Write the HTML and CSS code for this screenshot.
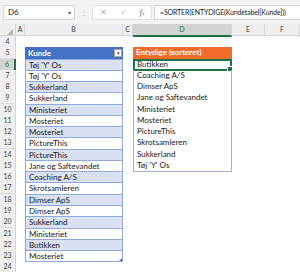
FILE: index.html
```html
<!DOCTYPE html>
<html>
<head>
  <meta charset="UTF-8">
  <title>SORTER ENTYDIGE</title>
  <link rel="stylesheet" href="styles.css">
</head>
<body>

<div class="toolbar">
  <div class="nameBox">
    <span>D6</span>
    <span class="caret">&#9662;</span>
  </div>
  <div class="dots">&#8942;</div>
  <div class="fxButtons">
    <span class="fxBtn">&#10005;</span>
    <span class="fxBtn">&#10003;</span>
    <span class="fxBtn fx"><i>f</i><small>x</small></span>
  </div>
  <div class="formula">=SORTER(ENTYDIGE(Kundetabel[Kunde]))</div>
</div>

<div class="sheet">
  <div class="row colHeads">
    <div class="corner"><span class="tri"></span></div>
    <div class="ch">A</div>
    <div class="ch">B</div>
    <div class="ch">C</div>
    <div class="ch sel">D</div>
    <div class="ch">E</div>
    <div class="ch">F</div>
  </div>
  <div id="rows"></div>
</div>

<script>
  const kunder = ["Tøj 'Y' Os", "Tøj 'Y' Os", "Sukkerland", "Sukkerland", "Ministeriet", "Mosteriet",
    "Mosteriet", "PictureThis", "PictureThis", "Jane og Saftevandet", "Coaching A/S", "Skrotsamleren",
    "Dimser ApS", "Dimser ApS", "Sukkerland", "Ministeriet", "Butikken", "Mosteriet"];

  // unique + sorted, like the formula
  const entydige = [...new Set(kunder)].sort((a, b) => a.localeCompare(b, "da"));

  const rows = document.getElementById("rows");
  for (let r = 4; r <= 24; r++) {
    let b = "", d = "";
    let bClass = "", dClass = "";

    if (r === 5) {
      bClass = "tHead";
      b = `<span>Kunde</span><span class="filter">&#9662;</span>`;
      dClass = "sHead";
      d = "Entydige (sorteret)";
    } else if (r >= 6 && r < 6 + kunder.length) {
      bClass = "tCell " + (r % 2 === 0 ? "band" : "");
      if (r === 5 + kunder.length) bClass += " tLast";
      b = kunder[r - 6];
    }
    if (r >= 6 && r < 6 + entydige.length) {
      dClass = "spill";
      if (r === 6) dClass += " active";
      if (r === 5 + entydige.length) dClass += " spillLast";
      d = entydige[r - 6];
    }

    const row = document.createElement("div");
    row.className = "row";
    row.innerHTML = `
      <div class="rh ${r === 6 ? 'sel' : ''}">${r}</div>
      <div></div>
      <div class="cell ${bClass}">${b}</div>
      <div></div>
      <div class="cell ${dClass}">${d}</div>
      <div></div>
      <div></div>
    `;
    rows.appendChild(row);
  }
</script>

</body>
</html>
```

FILE: styles.css
```css
body {
  margin: 0;
  width: 300px;
  height: 272px;
  overflow: hidden;
  background: #fff;
  font-family: Lato, "Open Sans", sans-serif;
  font-size: 8px;
  color: #1a1a1a;
}

.toolbar {
  height: 24px;
  background: #f3f3f3;
  display: flex;
  align-items: center;
  padding: 0 0 0 3px;
  box-sizing: border-box;
}

.nameBox {
  width: 72px;
  height: 15px;
  background: #fff;
  border: 1px solid #d6d6d6;
  box-sizing: border-box;
  display: flex;
  align-items: center;
  justify-content: space-between;
  padding: 0 3px 0 4px;
  font-size: 8px;
}

.caret {
  color: #555;
  font-size: 6px;
}

.dots {
  width: 17px;
  text-align: center;
  color: #b8b8b8;
  font-size: 8px;
}

.fxButtons {
  width: 60px;
  height: 15px;
  background: #fff;
  border: 1px solid #e0e0e0;
  box-sizing: border-box;
  display: flex;
  align-items: center;
  justify-content: space-around;
}

.fxBtn {
  color: #b0b0b0;
  font-size: 8px;
}

.fx {
  color: #555;
  font-family: "Liberation Serif", serif;
  font-size: 8px;
}

.fx small {
  font-size: 5px;
}

.formula {
  flex: 1;
  height: 15px;
  margin-left: 2px;
  background: #fff;
  border: 1px solid #d6d6d6;
  border-right: none;
  box-sizing: border-box;
  padding: 0 0 0 5px;
  line-height: 13px;
  font-size: 7px;
  letter-spacing: -0.15px;
  white-space: nowrap;
  overflow: hidden;
}

.row {
  display: grid;
  grid-template-columns: 16px 9px 98px 10px 99px 33px 1fr;
  height: 11.28px;
}

.colHeads {
  height: 11px;
  background: #efefef;
  border-bottom: 1px solid #d4d4d4;
  color: #444;
}

.corner {
  position: relative;
  border-right: 1px solid #d4d4d4;
}

.tri {
  position: absolute;
  right: 2px;
  bottom: 2px;
  width: 0;
  height: 0;
  border-left: 6px solid transparent;
  border-bottom: 6px solid #b7b7b7;
}

.ch {
  text-align: center;
  line-height: 11px;
  border-right: 1px solid #d8d8d8;
  font-size: 7px;
}

.ch.sel {
  background: #d3d3d3;
  color: #217346;
  border-bottom: 2px solid #217346;
}

.rh {
  background: #efefef;
  color: #444;
  text-align: center;
  font-size: 7px;
  line-height: 11px;
  border-right: 1px solid #d4d4d4;
  border-bottom: 1px solid #dedede;
  box-sizing: border-box;
}

.rh.sel {
  background: #d3d3d3;
  color: #217346;
  border-right: 2px solid #217346;
}

.cell {
  line-height: 11px;
  padding-left: 3px;
  white-space: nowrap;
  box-sizing: border-box;
  position: relative;
}

.tHead {
  background: #4472c4;
  color: #fff;
  font-weight: bold;
  display: flex;
  justify-content: space-between;
  align-items: center;
  padding-right: 1px;
}

.filter {
  width: 8px;
  height: 8px;
  background: #fff;
  border: 1px solid #a6a6a6;
  box-sizing: border-box;
  color: #666;
  font-size: 5px;
  line-height: 6px;
  text-align: center;
}

.tCell {
  border-left: 1px solid #8ea9db;
  border-right: 1px solid #8ea9db;
  border-top: 1px solid #8ea9db;
  line-height: 10px;
}

.tCell.band {
  background: #d9e1f2;
}

.tLast {
  border-bottom: 1px solid #8ea9db;
}

.tLast::after {
  content: "";
  position: absolute;
  right: 0;
  bottom: 0;
  border-left: 3px solid transparent;
  border-bottom: 3px solid #4472c4;
}

.sHead {
  background: #f26b2a;
  color: #fff;
  font-weight: bold;
}

.spill {
  border-left: 1px solid #9bb3e0;
  border-right: 1px solid #9bb3e0;
  line-height: 11px;
}

.spillLast {
  border-bottom: 1px solid #9bb3e0;
  line-height: 10px;
}

.active {
  border: 2px solid #217346;
  line-height: 7px;
  padding-left: 2px;
}

.active::after {
  content: "";
  position: absolute;
  right: -3px;
  bottom: -3px;
  width: 4px;
  height: 4px;
  background: #217346;
  border: 1px solid #fff;
}
```
